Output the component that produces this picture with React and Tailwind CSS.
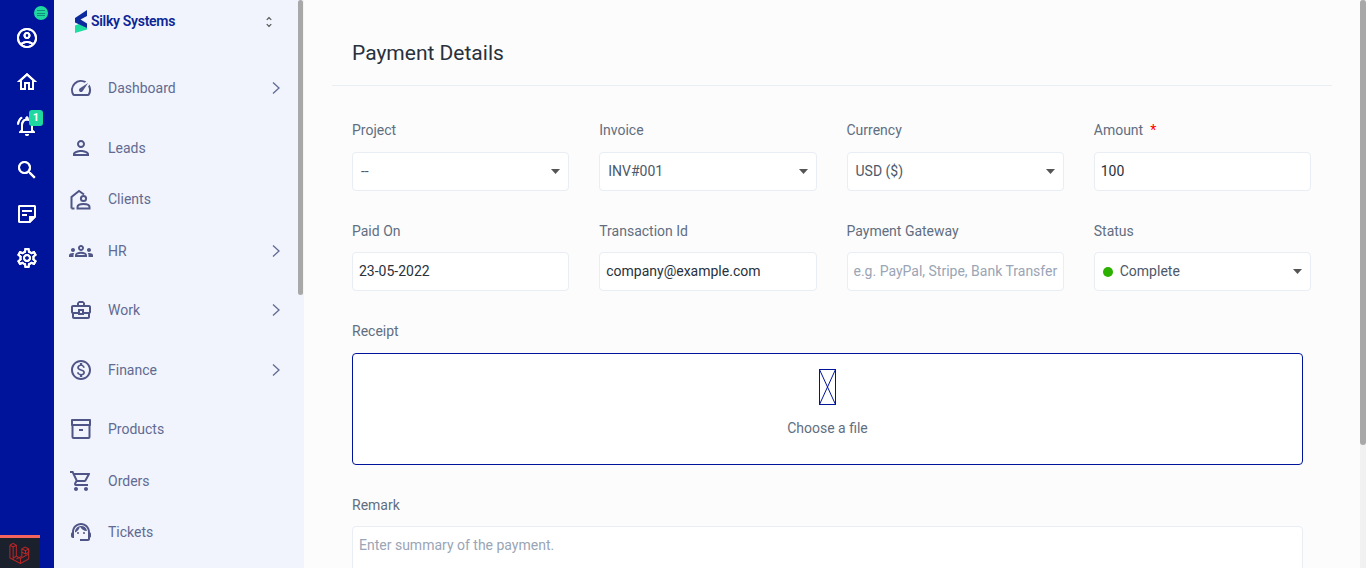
import React from "react";
import {
  MdOutlineAccountCircle, MdOutlineHome, MdOutlineNotificationsActive, MdSearch, MdOutlineStickyNote2, MdOutlineSettings,
  MdOutlineSpeed, MdOutlinePerson, MdOutlineGroups, MdOutlineBusinessCenter, MdOutlineShoppingCart, MdOutlineSupportAgent,
  MdOutlineUnfoldMore, MdOutlineMonetizationOn,
} from "react-icons/md";

const ClientsIcon = (p) => (
  <svg viewBox="0 0 24 24" fill="none" stroke="currentColor" strokeWidth="2" {...p}>
    <path d="M2.500 20.500V9L10 3l5 3.500" />
    <path d="M2.500 20.500h3" />
    <circle cx="14.500" cy="10.500" r="2.600" />
    <path d="M8.500 20.500v-1.500c0-2 3-3 6-3s6 1 6 3v1.500z" />
  </svg>
);

const ArchiveIcon = (p) => (
  <svg viewBox="0 0 24 24" fill="none" stroke="currentColor" strokeWidth="2" {...p}>
    <path d="M3 3h18v5H3z" strokeLinejoin="round" />
    <path d="M3.500 8v12a1 1 0 0 0 1 1h15a1 1 0 0 0 1-1V8" />
    <path d="M10 13h4" />
  </svg>
);

const Chevron = () => (
  <svg viewBox="0 0 10 14" fill="none" stroke="#616a92" strokeWidth="1.300" className="ml-auto w-[10px] h-[14px]">
    <path d="M2 1.500 8 7l-6 5.500" />
  </svg>
);

const Caret = () => (
  <svg viewBox="0 0 9 5" className="w-[9px] h-[5px]" fill="#555">
    <path d="M0 0h9L4.500 5z" />
  </svg>
);

const Logo = () => (
  <svg viewBox="0 0 12 23" className="w-[12px] h-[23px] shrink-0 mr-[4px]">
    <path d="M0 23V15.500L4 14l8 3.500v2z" fill="#1fdca0" />
    <path d="M12 0 0 8v4.500L12 18v-4.500L5.500 9.500 12 6z" fill="#0a2a9e" />
  </svg>
);

const Laravel = () => (
  <svg viewBox="0 0 24 24" fill="none" stroke="#b92626" strokeWidth="1.100" className="w-[22px] h-[22px]">
    <path d="M1 3.500 4.500 1.500 8 3.500v12l4.500 2.500 9-5V9" />
    <path d="M1 3.500v14l11.500 6 9-5v-5.500" />
    <path d="M4.500 5.500 8 3.500M4.500 5.500 1 3.500M4.500 5.500V19.500" />
    <path d="M8 15.500 4.500 17.500M12.500 18v5.500" />
    <path d="M14 7.500 17.500 5.500 21.500 7.500V11L18 13l-4-2zM18 9.500V13M14 7.500l4 2 3.500-2" />
    <path d="M14 11v4.500L8 18.500" />
  </svg>
);

const rail = [MdOutlineAccountCircle, MdOutlineHome, MdOutlineNotificationsActive, MdSearch, MdOutlineStickyNote2, MdOutlineSettings];

const menu = [
  { label: "Dashboard", Icon: MdOutlineSpeed, arrow: true, h: "h-[60px]" },
  { label: "Leads", Icon: MdOutlinePerson, h: "h-[60px]" },
  { label: "Clients", Icon: ClientsIcon, h: "h-[43px]" },
  { label: "HR", Icon: MdOutlineGroups, arrow: true, h: "h-[60px]" },
  { label: "Work", Icon: MdOutlineBusinessCenter, arrow: true, h: "h-[58px]" },
  { label: "Finance", Icon: MdOutlineMonetizationOn, arrow: true, h: "h-[62px]" },
  { label: "Products", Icon: ArchiveIcon, h: "h-[56px]" },
  { label: "Orders", Icon: MdOutlineShoppingCart, h: "h-[48px]" },
  { label: "Tickets", Icon: MdOutlineSupportAgent, h: "h-[54px]" },
];

const boxCls = "h-[39px] bg-white border border-[#e8eef3] rounded-[4px] flex items-center text-[14px]";

const Label = ({ children, tight }) => (
  <div className={`h-[20px] ${tight ? "mb-[11px]" : "mb-[12px]"} text-[14px] leading-[20px] text-[#616e80]`}>{children}</div>
);

const Select = ({ label, children, tight }) => (
  <div>
    <Label tight={tight}>{label}</Label>
    <div className={`${boxCls} pl-[8px] pr-[8px] justify-between text-[#4d5869]`}>
      <span className="flex items-center">{children}</span>
      <Caret />
    </div>
  </div>
);

const Input = ({ label, value, req, placeholder, tight }) => (
  <div>
    <Label tight={tight}>
      {label}
      {req && <span className="text-[#f00] text-[14px] ml-[7px]">*</span>}
    </Label>
    <div className={`${boxCls} pl-[6px] pr-[6px] whitespace-nowrap ${placeholder ? "text-[#9aa5b5]" : "text-[#28313c]"}`}>
      {value || placeholder}
    </div>
  </div>
);

export default function App() {
  return (
    <div className="relative flex h-[568px] w-[1366px] overflow-hidden bg-[#fcfcfd] font-['Roboto',sans-serif]">
      {/* icon rail */}
      <div className="relative w-[54px] shrink-0 bg-[#00149b] flex flex-col items-center pt-[26px] gap-[20px] text-white">
        {rail.map((Icon, i) => (
          <Icon key={i} className="w-[24px] h-[24px] text-white drop-shadow-[0_0_0.6px_#ffffff]" />
        ))}
        <div className="absolute left-[34px] top-[6px] w-[14px] h-[14px] rounded-full bg-[#1ed8a0] flex flex-col items-center justify-center gap-[1.5px]">
          <span className="block w-[8px] h-[1px] bg-[#0f8f7c]" />
          <span className="block w-[8px] h-[1px] bg-[#0f8f7c]" />
          <span className="block w-[8px] h-[1px] bg-[#0f8f7c]" />
        </div>
        <div className="absolute left-[29px] top-[110px] w-[14px] h-[16px] rounded-[3px] bg-[#1ed8a0] text-white text-[11px] font-bold leading-[16px] text-center">1</div>
        <div className="absolute left-0 bottom-0 w-[40px] h-[33px] border-t-[3px] border-[#f4645f] bg-[#1a202c] flex items-center justify-center">
          <Laravel />
        </div>
      </div>

      {/* sidebar */}
      <div className="relative w-[250px] shrink-0 bg-[#f1f4fc]">
        <div className="h-[43px] flex items-center pl-[21px] pr-[28px]">
          <Logo />
          <span className="text-[14px] font-semibold tracking-[-0.3px] text-[#0b2596]">Silky Systems</span>
          <MdOutlineUnfoldMore className="ml-auto w-[14px] h-[14px] text-[#555]" />
        </div>
        <div className="pt-[15px]">
          {menu.map(({ label, Icon, arrow, h }) => (
            <div key={label} className={`${h} flex items-center pl-[15px] pr-[23px]`}>
              <Icon className="w-[24px] h-[24px] shrink-0 text-[#4f5587]" />
              <span className="ml-[15px] text-[14px] text-[#616a92]">{label}</span>
              {arrow && <Chevron />}
            </div>
          ))}
        </div>
        <div className="absolute right-[1px] top-0 h-[295px] w-[5px] rounded-[3px] bg-[#a8a8a8]" />
      </div>

      {/* main */}
      <div className="flex-1 min-w-0 pl-[28px] pr-[34px]">
        <div className="h-[86px] border-b border-[#e8eef3] pl-[20px] pt-[39px] text-[21px] leading-[28px] text-[#28313c]">Payment Details</div>
        <div className="pl-[20px] pt-[34px]">
          <div className="grid grid-cols-4 gap-x-[30px] gap-y-[30px] w-[959px]">
            <Select label="Project">--</Select>
            <Select label="Invoice">INV#001</Select>
            <Select label="Currency">USD ($)</Select>
            <Input label="Amount" value="100" req />
            <Input label="Paid On" value="23-05-2022" tight />
            <Input label="Transaction Id" value="company@example.com" tight />
            <Input label="Payment Gateway" placeholder="e.g. PayPal, Stripe, Bank Transfer" tight />
            <Select label="Status" tight>
              <span className="w-[10px] h-[10px] rounded-full bg-[#2cb100] mr-[7px]" />
              Complete
            </Select>
          </div>
          <div className="mt-[30px]">
            <Label>Receipt</Label>
            <div className="w-[951px] h-[112px] border border-[#00149b] rounded-[4px] bg-white flex flex-col items-center pt-[15px]">
              <svg viewBox="0 0 17 36" className="w-[17px] h-[36px]" fill="none" stroke="#00149b" strokeWidth="1">
                <rect x="0.5" y="0.5" width="16" height="35" />
                <path d="M0.5 0.5 16.500 35.500M16.500 0.5 0.500 35.500" />
              </svg>
              <div className="mt-[13px] text-[14px] leading-[20px] text-[#616e80]">Choose a file</div>
            </div>
          </div>
          <div className="mt-[30px]">
            <Label tight>Remark</Label>
            <div className="w-[951px] h-[80px] bg-white border border-[#e8eef3] rounded-[4px] pl-[6px] pt-[8px] text-[14px] leading-[20px] text-[#9aa5b5]">Enter summary of the payment.</div>
          </div>
        </div>
      </div>

      {/* page scrollbar */}
      <div className="absolute right-0 top-0 bottom-0 w-[6px] bg-[#f1f1f1]">
        <div className="h-[445px] w-[6px] rounded-[3px] bg-[#a8a8a8]" />
      </div>
    </div>
  );
}
